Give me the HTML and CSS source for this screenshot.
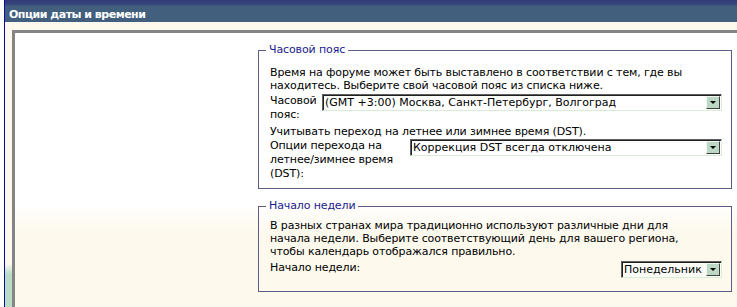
FILE: index.html
```html
<!DOCTYPE html>
<html lang="ru">
<head>
<meta charset="utf-8">
<title>Опции даты и времени</title>
<link rel="stylesheet" href="styles.css">
</head>
<body>
<div class="frame">
  <div class="header">Опции даты и времени</div>
  <div class="strip"></div>
  <div class="box">
    <fieldset class="fs fs-tz">
      <legend>Часовой пояс</legend>
      <p class="intro">Время на форуме может быть выставлено в соответствии с тем, где вы<br>находитесь. Выберите свой часовой пояс из списка ниже.</p>
      <div class="row">
        <div class="label label-tz">Часовой<br>пояс:</div>
        <div class="select select-tz"><span class="val">(GMT +3:00) Москва, Санкт-Петербург, Волгоград</span><span class="btn"><span class="tri"></span></span></div>
      </div>
      <p class="note">Учитывать переход на летнее или зимнее время (DST).</p>
      <div class="row">
        <div class="label label-dst">Опции перехода на<br>летнее/зимнее время<br>(DST):</div>
        <div class="select select-dst"><span class="val">Коррекция DST всегда отключена</span><span class="btn"><span class="tri"></span></span></div>
      </div>
    </fieldset>
    <fieldset class="fs fs-week">
      <legend>Начало недели</legend>
      <p class="intro">В разных странах мира традиционно используют различные дни для<br>начала недели. Выберите соответствующий день для вашего региона,<br>чтобы календарь отображался правильно.</p>
      <div class="row row-week">
        <div class="label">Начало недели:</div>
        <div class="select select-week"><span class="val">Понедельник</span><span class="btn"><span class="tri"></span></span></div>
      </div>
    </fieldset>
  </div>
</div>
</body>
</html>
```
FILE: styles.css
```css
html, body {
  margin: 0;
  padding: 0;
  background: #ffffff;
  overflow: hidden;
}
body {
  font-family: "DejaVu Sans", Verdana, sans-serif;
  font-size: 11px;
  letter-spacing: -0.12px;
  color: #000;
}
.frame {
  margin-left: 4px;
  border-left: 1px solid #0a0aa0;
  height: 307px;
  background:
    linear-gradient(to bottom, rgba(184,220,196,0) 0, rgba(184,220,196,0) 264px, #b8dcc4 274px) left top / 7px 100% no-repeat,
    #fdf9ed;
}
.header {
  height: 22px;
  box-sizing: border-box;
  background: linear-gradient(to bottom, #303878 0, #3a4a7e 5px, #42607e 6px, #42607e 100%);
  color: #ffffff;
  font-weight: bold;
  font-size: 11px;
  letter-spacing: -0.5px;
  line-height: 16px;
  padding: 7px 0 0 4px;
}
.strip {
  height: 8px;
}
.box {
  margin-left: 7px;
  border-left: 3px solid #858585;
  border-top: 3px solid #858585;
  height: 280px;
  box-sizing: border-box;
  background: linear-gradient(to bottom, #ffffff 0, #ffffff 170px, #fdf9ed 200px, #fdf9ed 100%);
  padding: 10px 5px 0 243px;
}
.fs {
  margin: 0;
  border: 1px solid #5c5c88;
  padding: 9px 9px 7px 11px;
  min-width: 0;
}
.fs legend {
  color: #1a1a8c;
  padding: 0 3px;
  margin-left: -4px;
  line-height: 14px;
}
.fs-week {
  margin-top: 10px;
  padding-top: 6px;
  padding-bottom: 13px;
}
p {
  margin: 0;
  line-height: 13px;
}
.intro {
  margin-bottom: 2px;
}
.fs-week .intro {
  margin-bottom: 3px;
}
.note {
  margin: 3px 0 1px;
}
.row {
  display: flex;
  align-items: flex-start;
  justify-content: space-between;
}
.label {
  line-height: 14px;
}
.label-tz { width: 50px; }
.label-dst { width: 138px; }
.select {
  box-sizing: border-box;
  height: 17px;
  border-top: 1px solid #606060;
  border-left: 1px solid #606060;
  border-right: 1px solid #d8ecd8;
  border-bottom: 1px solid #d8ecd8;
  box-shadow: inset 1px 1px 0 #202020;
  background: #ffffff;
  display: flex;
  align-items: center;
  justify-content: space-between;
  padding: 1px 1px 1px 2px;
  font-size: 11px;
  letter-spacing: 0;
  line-height: 13px;
}
.select-tz { width: 400px; }
.select-dst { width: 312px; }
.select-week {
  width: 101px;
  background: #fdfdf8;
}
.val {
  white-space: nowrap;
  overflow: hidden;
}
.btn {
  flex: none;
  width: 14px;
  height: 13px;
  box-sizing: border-box;
  background: #bcd8c4;
  border-top: 1px solid #f0f8f0;
  border-left: 1px solid #f0f8f0;
  border-right: 1px solid #404040;
  border-bottom: 1px solid #404040;
  display: flex;
  align-items: center;
  justify-content: center;
}
.tri {
  width: 0;
  height: 0;
  border-left: 3px solid transparent;
  border-right: 3px solid transparent;
  border-top: 3px solid #000;
}
```
